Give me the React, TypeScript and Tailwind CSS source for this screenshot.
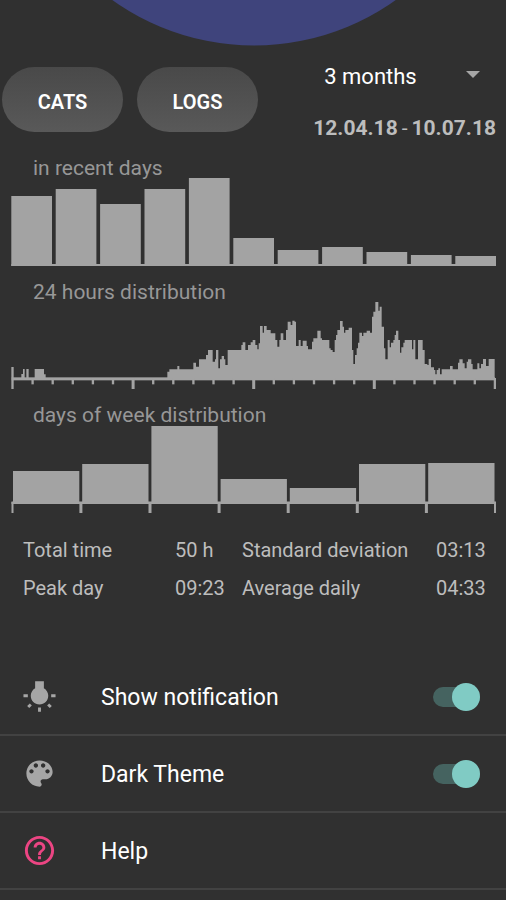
import React, { useState } from "react";
import { MdHelpOutline, MdWbIncandescent } from "react-icons/md";

const recentDays = [70, 77, 62, 77, 88, 28, 16, 19, 14, 11, 10];
const weekDays = [31, 38, 76, 23, 14, 38, 39];

// [x, top] steps of the activity outline, the axis is at HOURS_AXIS
const HOURS_AXIS = 268;
const HOURS_WIDTH = 1455;
const hours: [number, number][] = [
  [31, 252], [36, 237], [41, 268], [46, 237], [53, 268], [71, 237], [99, 253], [104, 268],
  [469, 245], [475, 238], [499, 228], [505, 238], [547, 218], [555, 230], [564, 208],
  [585, 195], [591, 180], [605, 215], [612, 208], [615, 180], [622, 235], [627, 208],
  [632, 198], [639, 208], [643, 225], [650, 180], [691, 165], [695, 157], [703, 180],
  [711, 165], [719, 157], [725, 150], [733, 165], [739, 178], [743, 160], [747, 108],
  [755, 128], [759, 108], [767, 120], [779, 130], [793, 150], [799, 170], [805, 150],
  [809, 130], [817, 150], [825, 120], [830, 95], [839, 105], [844, 92], [851, 95],
  [855, 168], [863, 150], [869, 168], [875, 152], [887, 168], [891, 178], [903, 155],
  [907, 145], [919, 122], [929, 145], [933, 150], [955, 175], [959, 180], [965, 186],
  [971, 150], [975, 135], [979, 120], [987, 93], [995, 110], [999, 128], [1003, 120],
  [1013, 113], [1023, 180], [1027, 222], [1032, 195], [1037, 175], [1041, 158],
  [1045, 128], [1053, 138], [1057, 128], [1067, 122], [1077, 128], [1083, 80],
  [1087, 65], [1093, 36], [1102, 62], [1106, 50], [1112, 110], [1119, 175], [1123, 208],
  [1130, 150], [1136, 172], [1140, 158], [1147, 150], [1151, 135], [1155, 122],
  [1162, 150], [1167, 188], [1171, 172], [1177, 158], [1181, 150], [1203, 178],
  [1207, 150], [1213, 208], [1221, 150], [1235, 180], [1241, 222], [1249, 225],
  [1253, 207], [1260, 232], [1269, 240], [1273, 253], [1277, 240], [1282, 235],
  [1287, 253], [1292, 238], [1317, 228], [1325, 238], [1341, 218], [1345, 208],
  [1355, 220], [1361, 235], [1367, 215], [1371, 208], [1381, 222], [1385, 238],
  [1399, 220], [1405, 235], [1410, 222], [1416, 207], [1425, 228], [1433, 207],
  [1451, 268],
];

const hoursPath =
  `M0 ${HOURS_AXIS}` + hours.map(([x, top]) => `H${x}V${top}`).join("") + "Z";

const stats = [
  ["Total time", "50 h", "Standard deviation", "03:13"],
  ["Peak day", "09:23", "Average daily", "04:33"],
];

interface ChartProps {
  title: string;
  viewBox: string;
  height: string;
  children: React.ReactNode;
}

const Chart: React.FC<ChartProps> = ({ title, viewBox, height, children }) => {
  return (
    <section className="mt-4 pl-[11px] pr-[10px]">
      <h2 className="pl-[22px] text-[21px] leading-5 text-[#979797]">{title}</h2>
      <svg
        viewBox={viewBox}
        preserveAspectRatio="none"
        className={`block w-full fill-[#a3a3a3] ${height}`}
        role="img"
        aria-label={title}
      >
        {children}
      </svg>
    </section>
  );
};

const RecentDays = () => (
  <Chart title="in recent days" viewBox="0 0 485 88" height="h-[88px]">
    {recentDays.map((h, i) => (
      <rect key={i} x={i * 44.4 + 0.3} y={88 - h} width={40.7} height={h} />
    ))}
    <rect x={0.3} y={86} width={484.4} height={2} />
  </Chart>
);

const HoursDistribution = () => (
  <Chart title="24 hours distribution" viewBox={`0 36 ${HOURS_WIDTH} 261`} height="h-[87px]">
    <path d={hoursPath} />
    <rect x={2} y={262} width={1450} height={9} />
    {Array.from({ length: 25 }, (_, i) => {
      const major = i % 6 === 0;
      const w = major && i > 0 && i < 24 ? 9 : 7;
      const top = i === 0 ? 231 : 264;
      return (
        <rect
          key={i}
          x={4.5 + i * 60.3 - w / 2}
          y={top}
          width={w}
          height={(major ? 297 : 283) - top}
        />
      );
    })}
  </Chart>
);

const WeekDistribution = () => (
  <Chart title="days of week distribution" viewBox="0 0 485 88" height="h-[88px]">
    {weekDays.map((h, i) => (
      <rect key={i} x={i * 69.2 + 2} y={77 - h} width={66.3} height={h} />
    ))}
    <rect x={0.5} y={76.5} width={484.5} height={2.5} />
    {Array.from({ length: 8 }, (_, i) => (
      <rect key={i} x={i === 0 ? 0.5 : i * 69.1 - 0.7} y={77} width={i % 7 === 0 ? 2 : 3} height={11} />
    ))}
  </Chart>
);

const PaletteIcon = () => (
  <svg viewBox="0 0 24 24" className="size-[35px] fill-[#a6a6a6]" aria-hidden="true">
    <path d="M12 3c-4.97 0-9 4.03-9 9s4.03 9 9 9c.83 0 1.5-.67 1.5-1.5 0-.39-.15-.74-.39-1.01-.23-.26-.38-.61-.38-.99 0-.83.67-1.5 1.5-1.5H16c2.76 0 5-2.24 5-5 0-4.42-4.03-8-9-8zm-5.5 9c-.83 0-1.5-.67-1.5-1.5S5.67 9 6.5 9 8 9.67 8 10.5 7.33 12 6.5 12zm3-4C8.67 8 8 7.33 8 6.5S8.67 5 9.5 5s1.5.67 1.5 1.5S10.33 8 9.5 8zm5 0c-.83 0-1.5-.67-1.5-1.5S13.67 5 14.5 5s1.5.67 1.5 1.5S15.33 8 14.5 8zm3 4c-.83 0-1.5-.67-1.5-1.5S16.67 9 17.5 9s1.5.67 1.5 1.5-.67 1.5-1.5 1.5z" />
  </svg>
);

const PillButton: React.FC<{ label: string }> = ({ label }) => {
  return (
    <button
      type="button"
      className="h-[65px] w-[121px] rounded-full bg-linear-to-b from-[#494949] to-[#595959] pt-1 text-[20px] font-semibold text-white"
    >
      {label}
    </button>
  );
};

interface RowProps {
  icon: React.ReactNode;
  children: React.ReactNode;
}

const Row: React.FC<RowProps> = ({ icon, children }) => {
  return (
    <li className="flex h-[77px] items-center border-b-2 border-[#424242] pl-[22px] pr-[26px]">
      <span className="mr-[44px] shrink-0">{icon}</span>
      {children}
    </li>
  );
};

interface SwitchRowProps {
  id: string;
  label: string;
  icon: React.ReactNode;
}

const SwitchRow: React.FC<SwitchRowProps> = ({ id, label, icon }) => {
  const [on, setOn] = useState(true);

  return (
    <Row icon={icon}>
      <label htmlFor={id} className="flex-1 pt-1 text-[23px] text-white">
        {label}
      </label>
      <input
        id={id}
        type="checkbox"
        role="switch"
        checked={on}
        onChange={() => setOn(!on)}
        className="relative h-5 w-[47px] appearance-none rounded-full bg-[#606060] before:absolute before:-top-[4px] before:left-0 before:size-7 before:rounded-full before:bg-[#bdbdbd] checked:bg-[#456360] checked:before:left-auto checked:before:right-0 checked:before:bg-[#80cbc4]"
      />
    </Row>
  );
};

export default function App() {
  return (
    <main className="min-h-screen overflow-hidden bg-[#303030] font-['Roboto',sans-serif]">
      <svg viewBox="0 0 506 46" className="mx-auto block h-[46px] w-full" aria-hidden="true">
        <circle cx={254} cy={-198} r={243.5} fill="#3f447c" />
      </svg>

      <header className="flex items-center justify-between pl-[2px] pr-[10px] pt-[11px]">
        <div className="flex gap-[14px]">
          <PillButton label="CATS" />
          <PillButton label="LOGS" />
        </div>
        <div className="flex flex-col gap-[21px] pb-[2px]">
          <div className="relative">
            <select
              aria-label="Period"
              className="block h-[38px] w-full appearance-none bg-transparent pl-[11px] text-[22px] text-white"
            >
              <option>3 months</option>
            </select>
            <svg
              viewBox="0 0 14 7"
              className="pointer-events-none absolute right-4 top-[14px] h-[7px] w-[14px] fill-[#a6a6a6]"
              aria-hidden="true"
            >
              <path d="M0 0h14L7 7z" />
            </svg>
          </div>
          <p className="flex gap-1 text-[21px] leading-6 font-bold text-[#bdbdbd]">
            <span>12.04.18</span>
            <span className="font-normal">-</span>
            <span>10.07.18</span>
          </p>
        </div>
      </header>

      <RecentDays />
      <HoursDistribution />
      <WeekDistribution />

      <div className="mt-[18px] pl-[23px] pr-[22px]">
        <table className="w-full table-fixed text-left text-[20px] text-[#bdbdbd]">
          <colgroup>
            <col className="w-[152px]" />
            <col className="w-[67px]" />
            <col />
            <col className="w-[48px]" />
          </colgroup>
          <tbody>
            {stats.map(([name, value, name2, value2]) => (
              <tr key={name} className="h-[38px] whitespace-nowrap">
                <th className="font-normal">{name}</th>
                <td>{value}</td>
                <th className="font-normal">{name2}</th>
                <td>{value2}</td>
              </tr>
            ))}
          </tbody>
        </table>
      </div>

      <ul className="mt-[52px]">
        <SwitchRow
          id="notification"
          label="Show notification"
          icon={<MdWbIncandescent size={35} className="text-[#a6a6a6]" />}
        />
        <SwitchRow id="dark-theme" label="Dark Theme" icon={<PaletteIcon />} />
        <Row icon={<MdHelpOutline size={35} className="text-[#ec4583]" />}>
          <a href="#help" className="flex-1 pt-1 text-[23px] text-white">
            Help
          </a>
        </Row>
      </ul>
    </main>
  );
}
